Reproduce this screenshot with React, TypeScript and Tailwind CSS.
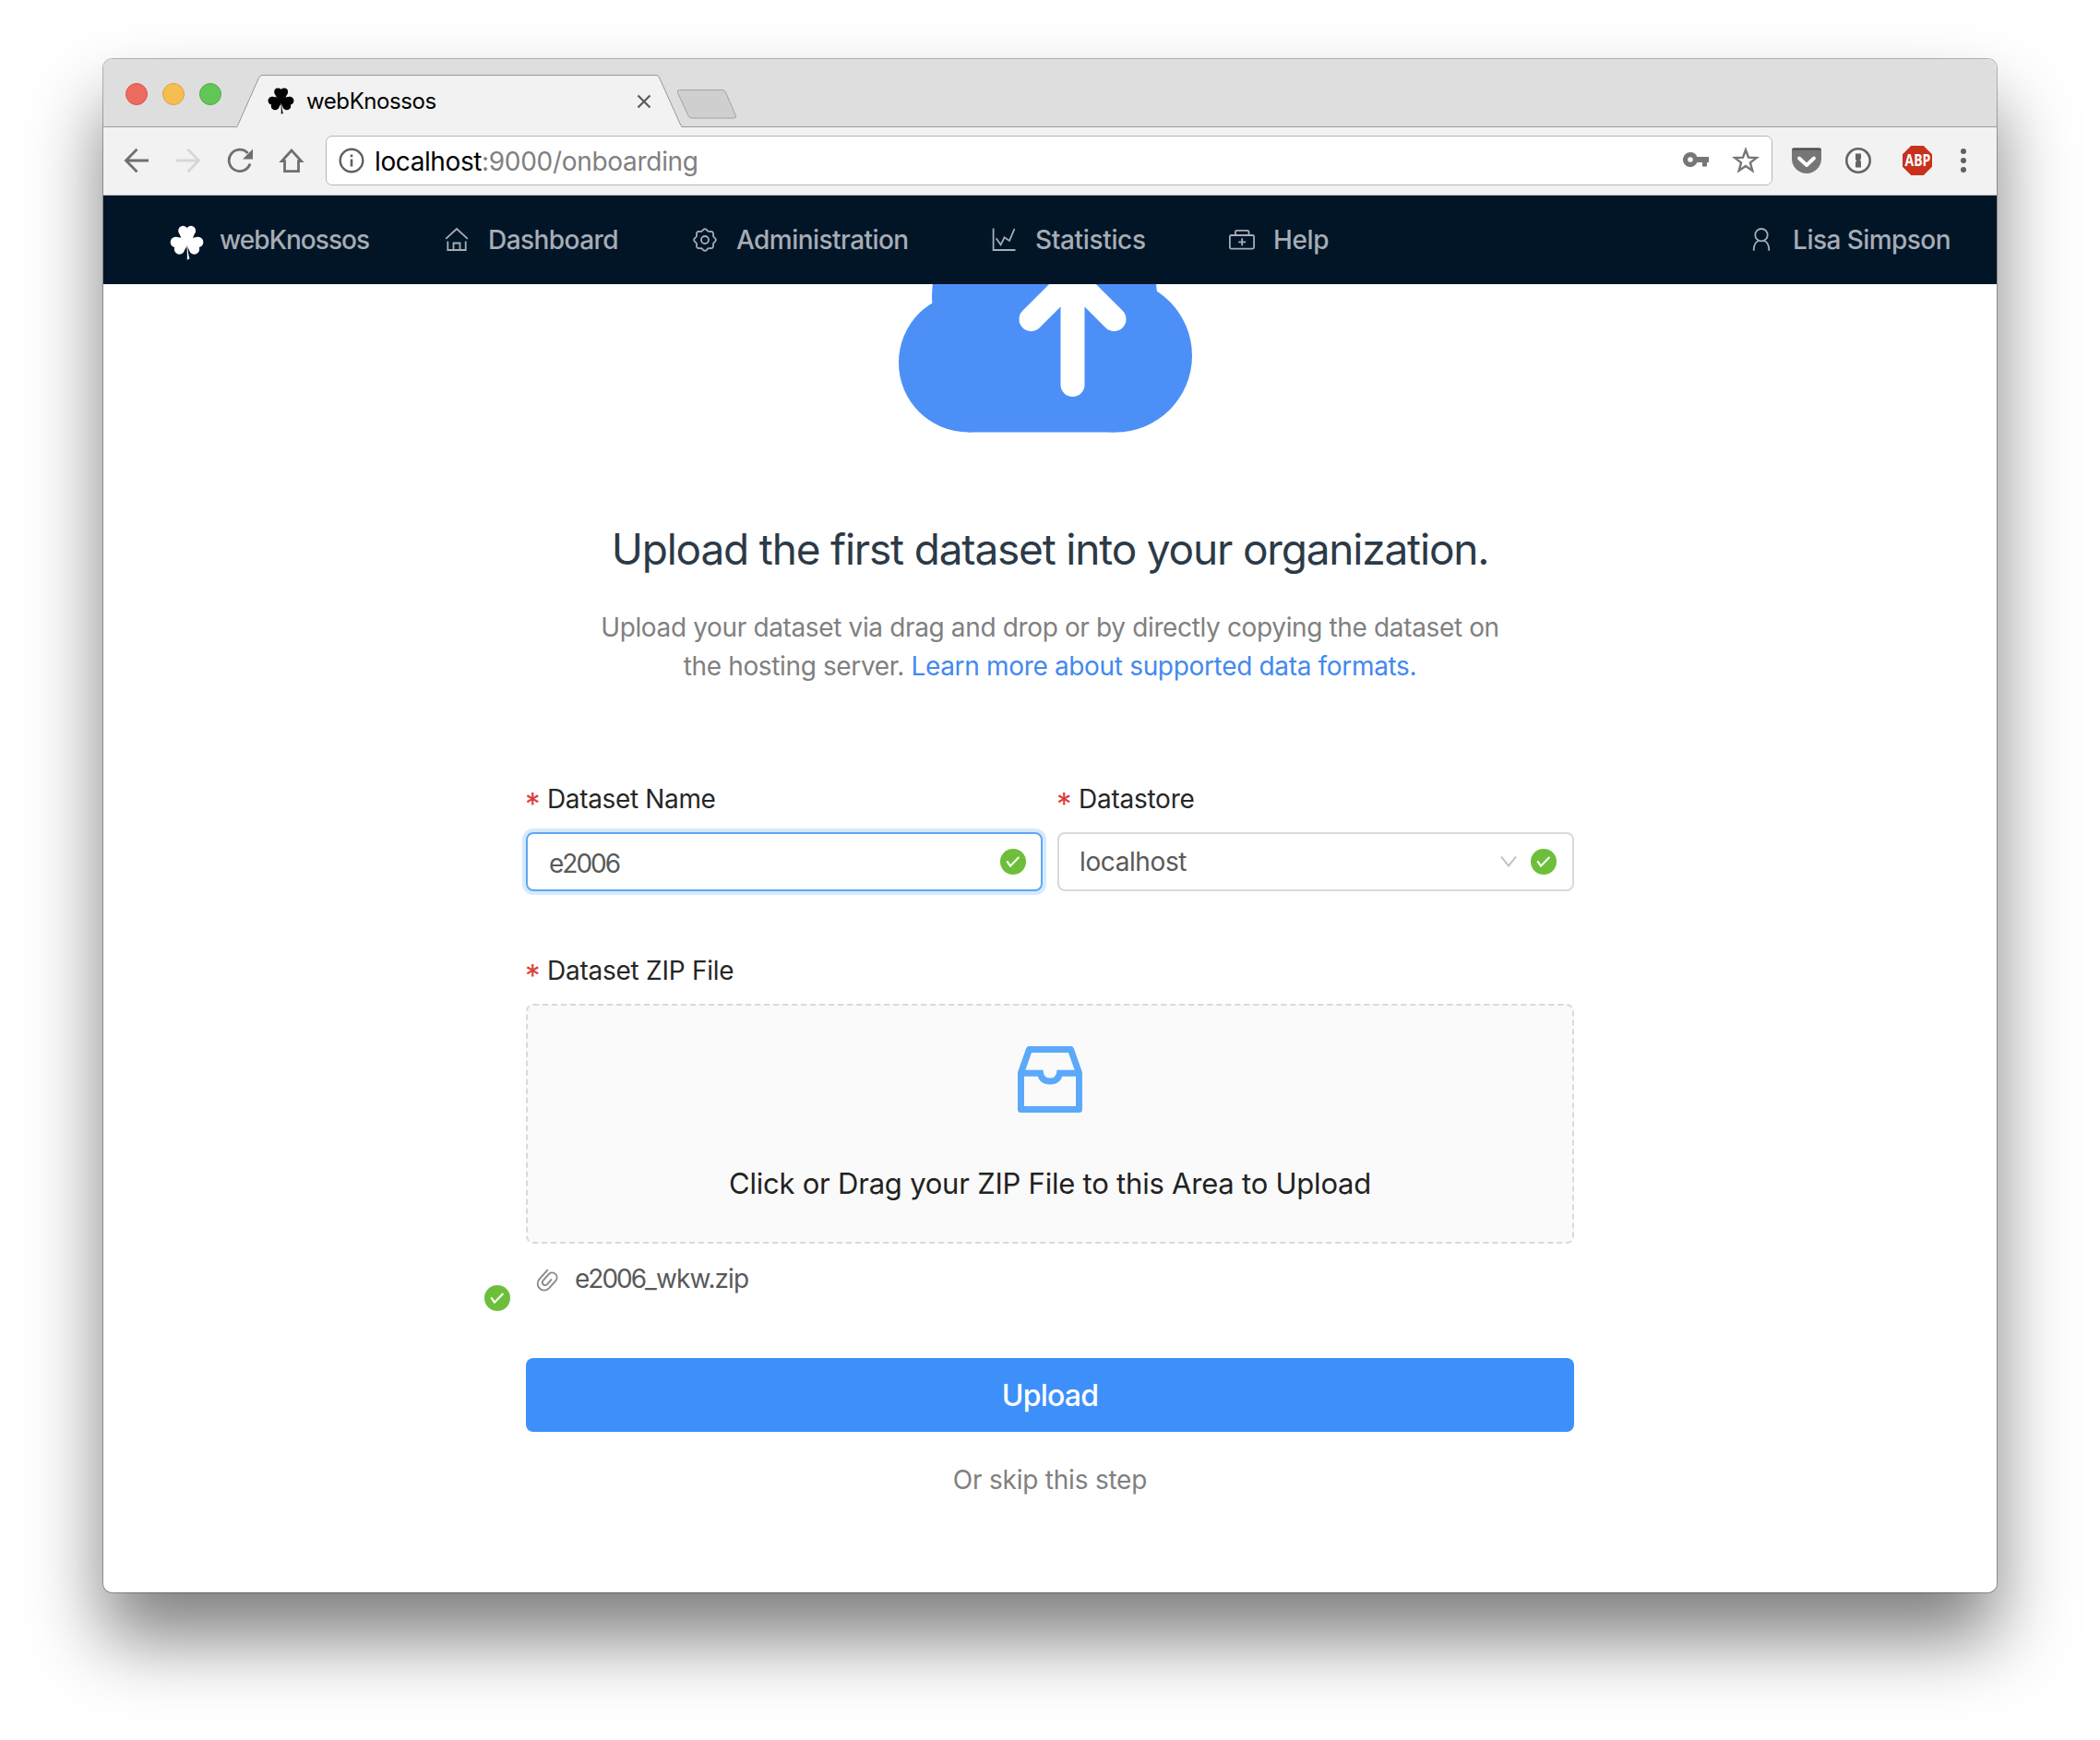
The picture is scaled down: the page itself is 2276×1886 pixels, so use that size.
import type { ReactNode } from "react";

function Clover({ className }: { className: string }) {
  return (
    <svg viewBox="22 26 112 113" className={className} fill="currentColor" preserveAspectRatio="none">
      <circle cx="65.5" cy="43.5" r="15.5" />
      <circle cx="91.5" cy="43.5" r="15.5" />
      <path d="M50.5 47 L106.5 47 L98 66 L81 92 H76 L59 66 Z" />
      <circle cx="41" cy="81" r="17" />
      <circle cx="53.5" cy="103.5" r="17" />
      <path d="M42 64 L60 67 L77 88 V96 L65 116 L44 100 Z" />
      <circle cx="115" cy="81" r="17" />
      <circle cx="102.5" cy="103.5" r="17" />
      <path d="M114 64 L97 67 L80 88 V96 L91 116 L112 100 Z" />
      <path d="M77.5 88 H80.5 C81 108 83 122 87 134 L79 138 C79.500 120 78.500 104 77.500 88 Z" />
    </svg>
  );
}

function CheckBadge() {
  return (
    <svg viewBox="0 0 28 28" className="size-7 shrink-0">
      <circle cx="14" cy="14" r="14" fill="#6dbf3b" />
      <path d="M7.300 13.400 L11 18.700 L20.400 9" fill="none" stroke="#fff" strokeWidth="2.100" />
    </svg>
  );
}

function LineIcon({ children }: { children: ReactNode }) {
  return (
    <svg viewBox="0 0 28 28" className="size-7 shrink-0" fill="none" stroke="currentColor" strokeWidth="1.800">
      {children}
    </svg>
  );
}

const gearPath =
  Array.from({ length: 97 }, (_, i) => {
    const t = (i / 96) * Math.PI * 2;
    const r = 10.9 + 0.95 * Math.cos(8 * t);
    return `${i ? "L" : "M"}${(14 + r * Math.cos(t)).toFixed(2)} ${(14 + r * Math.sin(t)).toFixed(2)}`;
  }).join(" ") + "Z";

function NavItem({ icon, label, className }: { icon: ReactNode; label: string; className: string }) {
  return (
    <div className={`flex items-center gap-5 ${className}`}>
      <LineIcon>{icon}</LineIcon>
      <span className="whitespace-nowrap">{label}</span>
    </div>
  );
}

function Label({ text, tracking, className = "" }: { text: string; tracking: string; className?: string }) {
  return (
    <div className={`flex h-[42px] items-center text-[28px] leading-[42px] text-[#262626] ${className}`}>
      <span className="-ml-px w-6 pt-[11px] text-[33px] leading-none text-[#dc3f3b]">*</span>
      <span className={`whitespace-nowrap ${tracking}`}>{text}</span>
    </div>
  );
}

function TabStrip() {
  return (
    <div className="flex h-[74px] border-b border-[#9d9d9d] bg-[#dedede]">
      <div className="ml-6 mt-[26px] flex gap-4">
        <span className="size-6 rounded-full border border-[#d9564c] bg-[#ed6a5f]" />
        <span className="size-6 rounded-full border border-[#dca43c] bg-[#f6be50]" />
        <span className="size-6 rounded-full border border-[#4fae43] bg-[#61c655]" />
      </div>
      <div className="relative -mb-px ml-4 flex h-[57px] w-[484px] items-center self-end pl-[34px] pr-[34px]">
        <svg viewBox="0 0 484 57" className="absolute inset-0 h-[57px] w-[484px]">
          <path
            d="M0 56.500 Q1.500 56 2.500 53 L24.500 3.500 Q26 0.500 28 0.500 H455 Q457.500 0.500 458.500 3 L481 53 Q482.500 56.500 484 56.500"
            fill="#f2f2f2"
            stroke="#989898"
          />
          <rect x="2" y="55.500" width="480" height="2" fill="#f2f2f2" />
        </svg>
        <Clover className="relative h-[29px] w-[29px] text-black" />
        <span className="relative ml-[13px] text-[24px] tracking-[-0.42px] text-black">webKnossos</span>
        <svg viewBox="0 0 16 16" className="relative ml-auto size-4" stroke="#5a5a5a" strokeWidth="2.200">
          <path d="M1.500 1.500 L14.500 14.500 M14.500 1.500 L1.500 14.500" />
        </svg>
      </div>
      <svg viewBox="0 0 66 34" className="-ml-[7px] mt-[31px] h-[34px] w-[66px]" fill="#cfcfcf" stroke="#a2a2a2">
        <path d="M3.500 2.500 H50 Q52.500 2.500 53.500 5 L64 29.500 Q65.500 33 62.500 33 H17 Q14 33 13 30.500 L1.500 5.500 Q0.500 2.500 3.500 2.500 Z" />
      </svg>
    </div>
  );
}

function Toolbar() {
  return (
    <div className="flex h-[74px] items-center border-b border-[#b5b5b5] bg-[#f2f2f2] pb-px pl-[22px]">
      <div className="flex gap-7">
        <svg viewBox="0 0 28 28" className="size-7" fill="none" stroke="#6e6f73" strokeWidth="2.800">
          <path d="M27 14 H3 M14.500 1.800 L2.500 14 L14.500 26.200" />
        </svg>
        <svg viewBox="0 0 28 28" className="size-7" fill="none" stroke="#d6d7d9" strokeWidth="2.800">
          <path d="M1 14 H25 M13.500 1.800 L25.500 14 L13.500 26.200" />
        </svg>
        <svg viewBox="0 0 28 28" className="size-7" fill="none" stroke="#6e6f73" strokeWidth="2.800">
          <path d="M25 17.500 A11.700 11.700 0 1 1 22.600 6" />
          <path d="M28 1.500 V12.500 H17 Z" fill="#6e6f73" stroke="none" />
        </svg>
        <svg viewBox="0 0 28 28" className="size-7" fill="none" stroke="#6e6f73" strokeWidth="2.800">
          <path d="M14 3 L3.500 14.600 H6.500 V25.600 H21.500 V14.600 H24.500 Z" />
        </svg>
      </div>
      <div className="ml-[23px] flex h-[54px] w-[1568px] items-center rounded-[7px] border border-[#b6b6b6] bg-white pl-[13px] pr-[13px]">
        <svg viewBox="0 0 28 28" className="size-7" fill="none" stroke="#5f6064" strokeWidth="2.400">
          <circle cx="14" cy="14" r="12.300" />
          <path d="M14 12.500 V20.500 M14 7.500 V10.200" strokeWidth="2.600" />
        </svg>
        <span className="ml-[11px] pt-px text-[28px] text-black">
          <span className="tracking-[-0.4px]">localhost</span>
          <span className="tracking-[-0.3px] text-[#808080]">:9000/onboarding</span>
        </span>
        <svg viewBox="0 0 28 16" className="-mt-0.5 ml-auto h-4 w-7" fill="#75767a">
          <path
            fillRule="evenodd"
            d="M8 0 A8 8 0 1 0 15.400 11 H21 V15.500 H26 V11 H28 V5 H15.400 A8 8 0 0 0 8 0 Z M8 5.200 A2.800 2.800 0 1 1 8 10.800 A2.800 2.800 0 0 1 8 5.200 Z"
          />
        </svg>
        <svg viewBox="0 0 30 30" className="ml-[25px] size-[30px]" fill="none" stroke="#75767a" strokeWidth="2.400">
          <path d="M15 3.500 L18 11.700 L26.800 12 L19.900 17.400 L22.300 25.900 L15 21 L7.700 25.900 L10.100 17.400 L3.200 12 L12 11.700 Z" />
        </svg>
      </div>
      <svg viewBox="0 0 32 29" className="ml-[21px] h-[29px] w-8">
        <path d="M2 0.500 H30 Q32 0.500 32 2.500 V12 A16 16 0 0 1 0 12 V2.500 Q0 0.500 2 0.500 Z" fill="#767676" />
        <path d="M2 0.500 H30 Q31.500 0.500 32 2.500 H0 Q0.500 0.500 2 0.500 Z" fill="#4a4a4a" />
        <path d="M8 11.500 L16 19 L24 11.500" fill="none" stroke="#fff" strokeWidth="3.800" strokeLinecap="round" strokeLinejoin="round" />
      </svg>
      <svg viewBox="0 0 28 28" className="ml-[26px] size-7">
        <circle cx="14" cy="14" r="12.700" fill="#f7f7f7" stroke="#646464" strokeWidth="2.600" />
        <path d="M11 6.500 H17 V12 L15.800 13.500 L17 15 V21.500 H11 V16 L12.200 14.500 L11 13 Z" fill="#646464" />
      </svg>
      <div className="ml-[34px] flex size-8 items-center justify-center bg-[#c8311b] [clip-path:polygon(29%_0,71%_0,100%_29%,100%_71%,71%_100%,29%_100%,0_71%,0_29%)]">
        <span className="scale-x-[0.8] font-['Open_Sans'] text-[17.5px] font-bold leading-none text-white">ABP</span>
      </div>
      <div className="ml-[31px] flex flex-col gap-1">
        <span className="size-1.5 rounded-full bg-[#5f6064]" />
        <span className="size-1.5 rounded-full bg-[#5f6064]" />
        <span className="size-1.5 rounded-full bg-[#5f6064]" />
      </div>
    </div>
  );
}

function NavBar() {
  return (
    <nav className="flex h-24 items-center bg-[#021527] pl-[71px] pr-[50px] text-[28px] font-[450] text-[#a6adb5]">
      <div className="flex w-[298px] items-center gap-[17px]">
        <Clover className="ml-px mt-1.5 h-[38px] w-[37px] text-white" />
        <span className="tracking-[-0.95px]">webKnossos</span>
      </div>
      <NavItem
        className="w-[269px] tracking-[-0.55px]"
        label="Dashboard"
        icon={
          <>
            <path d="M2.200 12.800 L14 2 L25.800 12.800" />
            <path d="M4.300 15.500 V25 H23.700 V15.500 M10.500 25 V17.500 H17.500 V25" />
          </>
        }
      />
      <NavItem
        className="w-[324px] tracking-[-0.55px]"
        label="Administration"
        icon={
          <>
            <path d={gearPath} />
            <circle cx="14" cy="14" r="4" />
          </>
        }
      />
      <NavItem
        className="w-[258px] tracking-[-0.35px]"
        label="Statistics"
        icon={<path d="M2.600 1.500 V25 H26.500 M5.600 12.300 L10.600 19.300 L14.600 11.300 L20 15 L25.500 2" />}
      />
      <NavItem
        className="tracking-[-0.4px]"
        label="Help"
        icon={
          <>
            <rect x="0.900" y="9" width="26.200" height="14.600" rx="1.500" />
            <path d="M7 9 V5.500 Q7 3.800 8.700 3.800 H19.800 Q21.500 3.800 21.500 5.500 V9 M14.200 12.300 V20.300 M10.200 16.300 H18.200" />
          </>
        }
      />
      <NavItem
        className="ml-auto tracking-[-0.55px]"
        label="Lisa Simpson"
        icon={
          <>
            <circle cx="14" cy="8.700" r="6.700" />
            <path d="M5.700 25.800 C5.700 20 8 16 11 15 M22.300 25.800 C22.300 20 20 16 17 15" />
          </>
        }
      />
    </nav>
  );
}

export default function App() {
  return (
    <div className="h-[1886px] w-[2276px] overflow-hidden bg-white pl-[112px] pt-16 font-['Inter','Liberation_Sans',sans-serif] font-[425]">
      <div className="h-[1662px] w-[2052px] rounded-[10px] shadow-[0_0_0_1px_rgba(0,0,0,0.28),0_50px_80px_rgba(0,0,0,0.5)]">
        <div className="h-full overflow-hidden rounded-[10px] bg-white">
          <TabStrip />
          <Toolbar />
          <NavBar />
          <main className="flex flex-col items-center">
            <svg viewBox="968 307.500 340 161" className="h-[161px] w-[340px]">
              <g fill="#4c90f7">
                <circle cx="1049.500" cy="392.500" r="75.500" />
                <circle cx="1209" cy="385" r="83" />
                <circle cx="1132" cy="322" r="122" />
                <rect x="1049" y="380" width="160" height="88" />
              </g>
              <path
                d="M1162.500 416.500 V302 M1117.500 345.500 L1162.500 300.500 L1207.500 345.500"
                fill="none"
                stroke="#fff"
                strokeWidth="26"
                strokeLinecap="round"
                strokeLinejoin="round"
              />
            </svg>
            <h1 className="mt-[96px] text-[46px] font-normal leading-[60px] tracking-[-1.19px] text-[#2c3a47]">
              Upload the first dataset into your organization.
            </h1>
            <p className="mt-[34px] text-center text-[28px] leading-[42px] tracking-[-0.36px] text-[#808080]">
              Upload your dataset via drag and drop or by directly copying the dataset on
              <br />
              the hosting server. <a className="tracking-[-0.33px] text-[#4389ee]">Learn more about supported data formats.</a>
            </p>
            <form className="relative mt-[102px] w-[1136px]">
              <div className="grid grid-cols-2 gap-4">
                <div>
                  <Label text="Dataset Name" tracking="tracking-[-0.35px]" />
                  <div className="mt-[15px] flex h-16 items-center justify-between rounded-lg border-2 border-[#5ba7f2] pl-[23px] pr-4 text-[28px] text-[#595959] ring-4 ring-[#d6e9fd]">
                    <span className="pt-[3px] tracking-[-2px]">e2006</span>
                    <CheckBadge />
                  </div>
                </div>
                <div>
                  <Label text="Datastore" tracking="tracking-[-0.25px]" />
                  <div className="mt-[15px] flex h-16 items-center rounded-lg border-2 border-[#d9d9d9] pl-[22px] pr-[17px] text-[28px] text-[#595959]">
                    <span className="-mt-px tracking-[-0.4px]">localhost</span>
                    <svg viewBox="0 0 20 14" className="ml-auto mr-[14px] h-3.5 w-5" fill="none" stroke="#bfbfbf" strokeWidth="2">
                      <path d="M2 1.500 L10 11.500 L18 1.500" />
                    </svg>
                    <CheckBadge />
                  </div>
                </div>
              </div>
              <Label text="Dataset ZIP File" tracking="tracking-[-0.25px]" className="mt-[65px]" />
              <div className="mt-[15px] flex h-[260px] flex-col items-center rounded-lg border-2 border-dashed border-[#d9d9d9] bg-[#fafafa] pt-[44px]">
                <svg viewBox="0 0 70 72" className="h-[72px] w-[70px]" fill="none" stroke="#5aa9fb" strokeWidth="7" strokeLinejoin="round">
                  <path d="M3.500 68.500 V29 L12.500 3.500 H57.500 L66.500 29 V68.500 Z" />
                  <path d="M3.500 29.300 H24.500 C25.500 35.500 29 38 35 38 S44.500 35.500 45.500 29.300 H66.500" strokeLinejoin="miter" />
                </svg>
                <span className="mt-[53px] text-[31px] leading-[48px] tracking-[-0.22px] text-[#222]">
                  Click or Drag your ZIP File to this Area to Upload
                </span>
              </div>
              <div className="mt-[17px] flex h-[42px] items-center pl-[9px] text-[28px] leading-[42px] text-[#595959]">
                <svg viewBox="0 0 28 28" className="mt-1 size-7" fill="none" stroke="#8a8a8a" strokeWidth="1.900">
                  <path d="M14.800 2.200 L5 13.200 A7.200 7.200 0 0 0 15.600 22.800 L23.600 13.800 A5.200 5.200 0 0 0 16 6.800 L9.300 14.300 A3 3 0 0 0 13.700 18.300 L19 12.500" />
                </svg>
                <span className="ml-4 tracking-[-0.9px]">
                  <span className="tracking-[-2px]">e2006</span>_wkw.zip
                </span>
              </div>
              <div className="absolute -left-[45px] top-[548px]">
                <CheckBadge />
              </div>
              <button
                type="button"
                className="mt-[65px] flex h-20 w-full items-center justify-center rounded-lg bg-[#3d90fa] pt-0.5 text-[32px] font-[450] tracking-[-0.75px] text-white"
              >
                Upload
              </button>
              <div className="mt-[31px] text-center text-[28px] leading-[42px] tracking-[-0.22px] text-[#808080]">Or skip this step</div>
            </form>
          </main>
        </div>
      </div>
    </div>
  );
}
